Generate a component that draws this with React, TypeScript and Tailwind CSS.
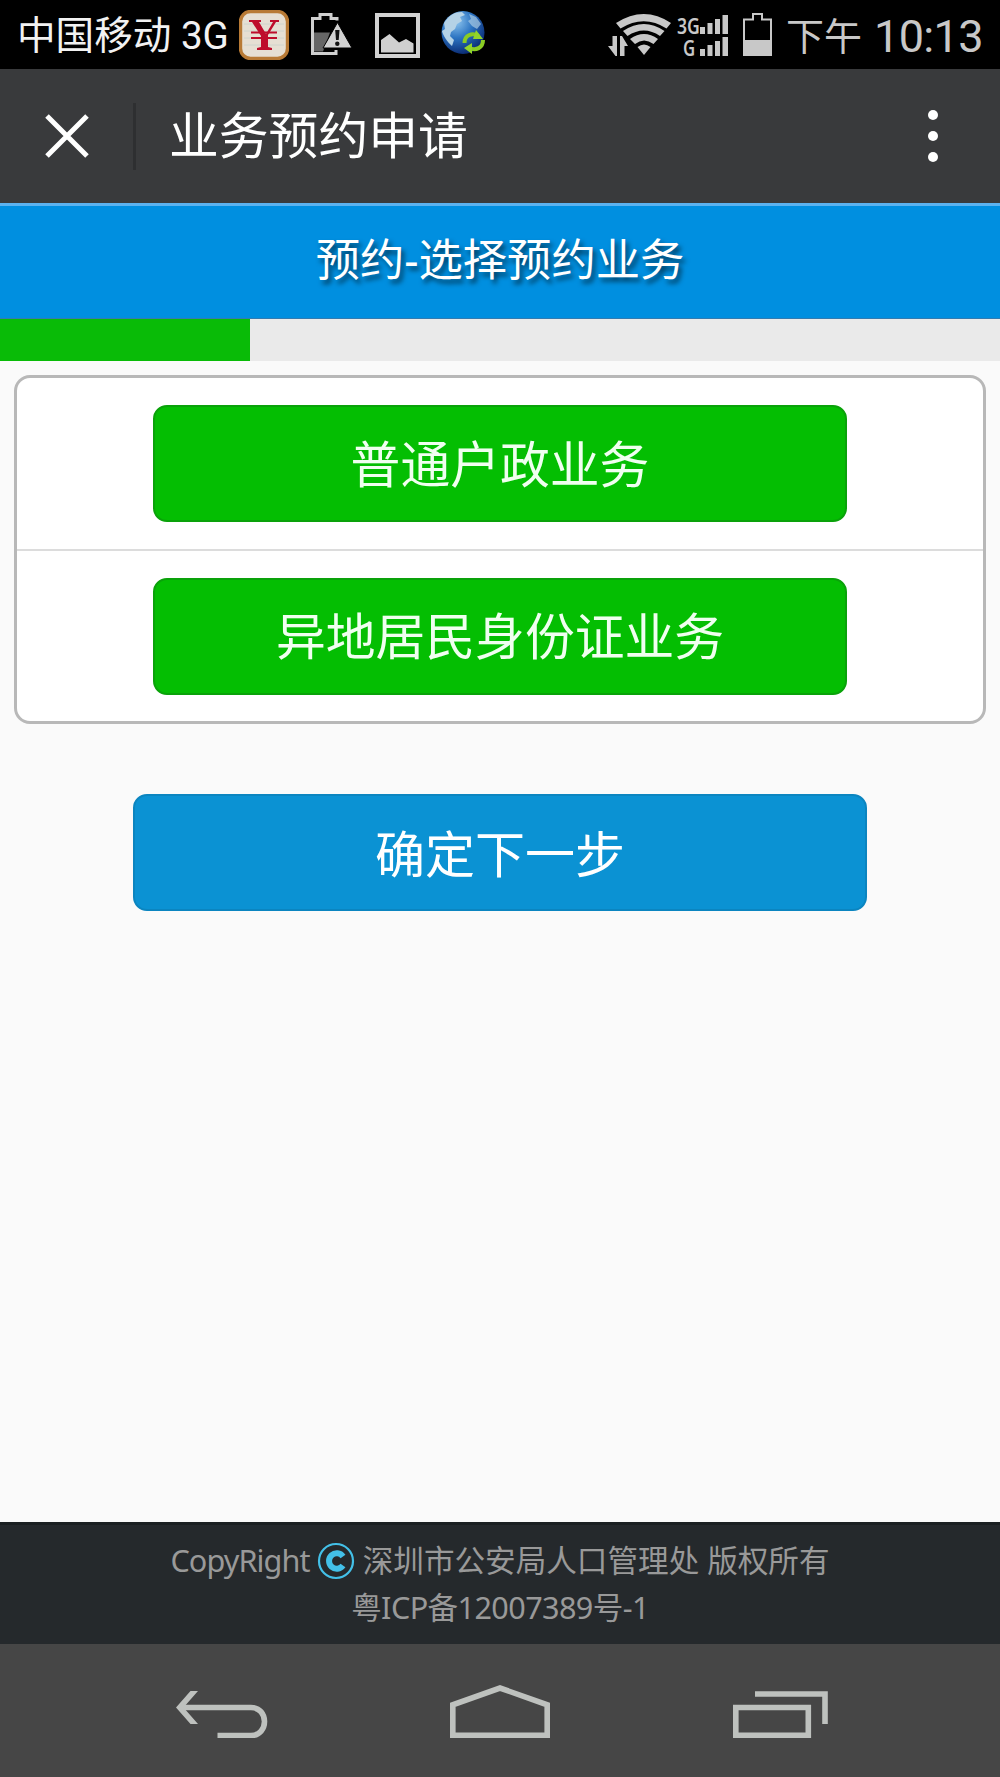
import type { ReactNode } from "react";

const services = ["普通户政业务", "异地居民身份证业务"];

function YenIcon() {
  return (
    <svg width="50" height="50" viewBox="0 0 50 50">
      <rect x="1.5" y="1.5" width="47" height="47" rx="10" fill="#e6dfd3" stroke="#b87a35" strokeWidth="3.4" />
      <path d="M5 14h40M5 21h40M5 28h40M5 35h40" stroke="#c9d0cb" strokeWidth="0.8" />
      <g fill="#be0c2b">
        <path d="M10 10h12v2h-2l7 12 7-12h-3v-2h9v2h-3l-8 13v12l4 1v2H18v-2l4-1V26L13 12h-3z" />
        <path d="M12 21.500h26v2H12zM12 27h26v2H12z" />
      </g>
    </svg>
  );
}

function BatteryAlertIcon() {
  return (
    <svg width="41" height="43" viewBox="0 0 41 43">
      <path d="M2 19.500h17l-7 19H2z" fill="#666" />
      <path d="M26 7.500V5.500h-6V1.500H9v4H1.500V40.500H25V37" fill="none" stroke="#cfcfcf" strokeWidth="3" />
      <path d="M26.500 9.500 41 35H12z" fill="#d2d2d2" stroke="#000" strokeWidth="1" />
      <path d="M24.200 17h4.300l-.8 10h-2.700z" fill="#111" />
      <circle cx="26.300" cy="30.800" r="2.200" fill="#111" />
    </svg>
  );
}

function PictureIcon() {
  return (
    <svg width="45" height="45" viewBox="0 0 45 45">
      <rect x="2" y="2" width="41" height="41" fill="none" stroke="#d2d2d2" strokeWidth="4" />
      <path d="M6 39.500V27l8.500-6L24 29.500l7-3.500 7.500 4.500v9z" fill="#d0d0d0" />
    </svg>
  );
}

function GlobeIcon() {
  return (
    <svg width="46" height="46" viewBox="0 0 46 46">
      <defs>
        <radialGradient id="ocean" cx="35%" cy="25%" r="75%">
          <stop offset="0" stopColor="#8cc4ee" />
          <stop offset="0.5" stopColor="#2c74c2" />
          <stop offset="1" stopColor="#0c2f78" />
        </radialGradient>
      </defs>
      <circle cx="23" cy="22.500" r="21.500" fill="url(#ocean)" />
      <path
        d="M4 13C9 5 15 2 22 2l3 3-5 2 2 4-5 3-2 5-4 3-1 4 4 4-2 6C7 32 3 25 2 21l3-2z"
        fill="#b4d2e6"
      />
      <path d="m29 4 7 3 5 7-4 5-5-3-4-5 3-2z" fill="#a9cbe3" opacity="0.7" />
      <g fill="none" stroke="#8acb24" strokeWidth="4">
        <path d="M24.500 33c0-8 8-11 14-7" />
        <path d="M43 30c0 8-7 11-14 8" />
      </g>
      <path d="m36 20 7 9h-10zM32 33l-8 5 8 6z" fill="#92d42b" />
    </svg>
  );
}

function WifiIcon() {
  return (
    <svg width="64" height="43" viewBox="0 0 64 43">
      <g fill="#c8c8c8">
        <path d="M8 10Q36-8 63 10l-4.500 5.500Q36 1 12.500 15.500z" />
        <path d="M15 18Q36 4 56.500 18l-4.500 5Q36 12 19.500 23z" />
        <path d="M22 26Q36 16 50 26l-4.500 5Q36 24 27 31z" />
        <path d="M29.500 34Q36 29 42.500 34L36 42z" />
        <path d="M4.500 23h4.500v20H7.500L0 33h4.500zM12 23h2l6 10h-3.500v10H12z" />
      </g>
    </svg>
  );
}

function SignalBars() {
  return (
    <svg width="28" height="19" viewBox="0 0 28 19">
      <path d="M0 12h5v7H0zM7.500 8h5v11h-5zM15 4h5v15h-5zM22.500 0H28v19h-5.500z" fill="#c8c8c8" />
    </svg>
  );
}

function BatteryIcon() {
  return (
    <svg width="29" height="43" viewBox="0 0 29 43">
      <path d="M1 42V6.500h9V1h9v5.500h9V42z" fill="none" stroke="#c8c8c8" strokeWidth="2" />
      <path d="M1 27h27v15H1z" fill="#c8c8c8" />
    </svg>
  );
}

function StatusBar() {
  return (
    <div className="flex h-[69px] items-center bg-black pr-[17px] pl-[17px] font-['Roboto','Noto_Sans_CJK_SC',sans-serif]">
      <div className="w-[222px] pt-[3px] text-[38.600px] leading-none whitespace-nowrap text-[#f2f2f2]">中国移动 3G</div>
      <div className="flex items-center">
        <YenIcon />
        <div className="ml-[22px]">
          <BatteryAlertIcon />
        </div>
        <div className="ml-[23px] pt-0.5">
          <PictureIcon />
        </div>
        <div className="mb-[3px] ml-5">
          <GlobeIcon />
        </div>
      </div>
      <div className="ml-auto flex items-center text-[#c8c8c8]">
        <WifiIcon />
        <div className="ml-[5px] flex w-[51px] flex-col gap-[3px] pt-0.5 font-['Noto_Sans',sans-serif] text-[21px] leading-none font-semibold">
          <div className="flex h-[19px] items-center justify-between">
            <span className="w-[22px] origin-left scale-x-[0.84] pt-[3px]">3G</span>
            <SignalBars />
          </div>
          <div className="flex h-[19px] items-center justify-between">
            <span className="ml-[6px] w-[16px] origin-left scale-x-[0.8] pt-[3px]">G</span>
            <SignalBars />
          </div>
        </div>
        <div className="ml-[15px]">
          <BatteryIcon />
        </div>
        <span className="ml-[14px] pt-1 text-[38px] leading-none">下午</span>
        <span className="ml-[12px] pt-[3px] text-[45px] leading-none tracking-[-0.6px]">10:13</span>
      </div>
    </div>
  );
}

function TitleBar() {
  return (
    <header className="flex h-[134px] items-center bg-[#393a3c] pr-[62px] pl-[45px]">
      <button aria-label="关闭">
        <svg width="44" height="44" viewBox="0 0 44 44">
          <path d="m2 2 40 40M42 2 2 42" stroke="#fff" strokeWidth="5" />
        </svg>
      </button>
      <div className="ml-[44px] h-[67px] w-[3px] bg-[#2e2f31]" />
      <h1 className="ml-[33px] text-[49.800px] leading-none text-white">业务预约申请</h1>
      <button aria-label="更多" className="ml-auto flex flex-col gap-[11px]">
        <span className="size-[10px] rounded-full bg-white" />
        <span className="size-[10px] rounded-full bg-white" />
        <span className="size-[10px] rounded-full bg-white" />
      </button>
    </header>
  );
}

function ServiceButton({ children }: { children: ReactNode }) {
  return (
    <button className="h-[117px] w-[694px] rounded-[14px] border-2 border-[#0aa20a] bg-[#04be02] pt-0.5 text-[49.800px] leading-none text-[#f0fff0]">
      {children}
    </button>
  );
}

function NavBar() {
  return (
    <nav className="flex h-[133px] items-start bg-[#464646] pt-[41px] pl-[176px]">
      <svg width="93" height="53" viewBox="0 0 93 53" fill="none" stroke="#bec1be" strokeWidth="5.600">
        <path d="M6 22.500h69c18 0 18 28 0 28H41.500" />
        <path d="M0 22.500 14.500 6H22L7.500 22.500 22 39h-7.500z" fill="#bec1be" stroke="none" />
      </svg>
      <svg className="ml-[181px]" width="100" height="53" viewBox="0 0 100 53" fill="none" stroke="#bec1be" strokeWidth="5.600">
        <path d="M2.800 50.200V19.800L50 3l47.200 16.800v30.400z" />
      </svg>
      <svg className="ml-[183px]" width="96" height="53" viewBox="0 0 96 53" fill="none" stroke="#bec1be" strokeWidth="5.600">
        <path d="M2.800 22.500h72.500v27.700H2.800zM22 9h70v30" />
      </svg>
    </nav>
  );
}

export default function App() {
  return (
    <div className="flex h-[1777px] w-[1000px] flex-col overflow-hidden bg-[#fafafa] font-['Noto_Sans','Noto_Sans_CJK_SC',sans-serif]">
      <StatusBar />
      <TitleBar />

      <div className="flex h-[116px] items-center justify-center border-t-[3px] border-b border-t-[#5cb2ef] border-b-[#337bb0] bg-[#008fe0] pb-[6px]">
        <h2 className="text-[44.300px] leading-none text-white [text-shadow:3px_4px_5px_rgba(0,0,0,0.6)]">
          预约-选择预约业务
        </h2>
      </div>

      <div className="h-[42px] bg-[#eaeaea]">
        <div className="h-full w-1/4 bg-[#09bb07]" />
      </div>

      <main className="flex flex-1 flex-col items-center pt-[14px]">
        <div className="w-[972px] rounded-[16px] border-[3px] border-[#b8b8b8] bg-white">
          {services.map((name, i) => (
            <div
              key={name}
              className={
                i === 0
                  ? "flex h-[173px] items-center justify-center border-b-2 border-[#dcdcdc]"
                  : "flex h-[170px] items-center justify-center"
              }
            >
              <ServiceButton>{name}</ServiceButton>
            </div>
          ))}
        </div>
        <button className="mt-[70px] h-[117px] w-[734px] rounded-[14px] border-2 border-[#0b85c0] bg-[#0b92d3] pt-0.5 text-[50px] leading-none text-white">
          确定下一步
        </button>
      </main>

      <footer className="flex h-[122px] flex-col items-center border-t-[3px] border-[#1b2022] bg-[#25292c] pt-[12px] text-[30.600px] leading-[47px] text-[#999]">
        <div className="flex items-center whitespace-pre">
          <span className="tracking-[-0.9px]">CopyRight </span>
          <svg width="38" height="38" viewBox="0 0 38 38" fill="none" stroke="#43c0e8">
            <circle cx="19" cy="19" r="17" strokeWidth="2.200" />
            <path d="M26 14.500a7.700 7.700 0 1 0 0 9" strokeWidth="6" />
          </svg>
          <span> 深圳市公安局人口管理处 版权所有</span>
        </div>
        <div className="tracking-[-0.6px]">粤ICP备12007389号-1</div>
      </footer>

      <NavBar />
    </div>
  );
}
